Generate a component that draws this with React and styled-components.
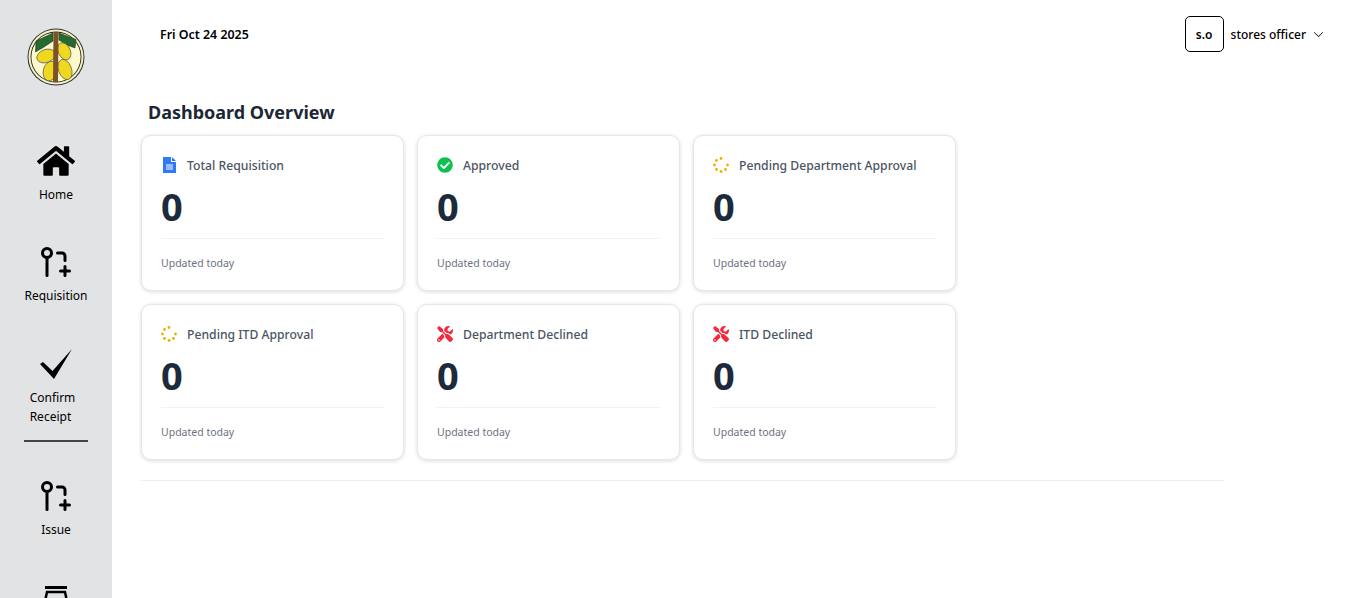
import React from 'react'
import styled, { createGlobalStyle } from 'styled-components'
import { FaHome, FaCheckCircle, FaTools } from 'react-icons/fa'
import { BsChevronDown } from 'react-icons/bs'
import { LuGitPullRequestCreate } from 'react-icons/lu'

const GlobalStyle = createGlobalStyle`
  html, body { margin: 0; padding: 0; height: 100%; overflow: hidden; background: #fff; }
  body { font-family: "Noto Sans", "Open Sans", sans-serif; color: #1f2937; }
`

const Layout = styled.div`
  display: flex;
  height: 598px;
  overflow: hidden;
`

const Sidebar = styled.aside`
  width: 112px;
  flex: none;
  height: 598px;
  overflow: hidden;
  background: #e2e3e5;
  display: flex;
  flex-direction: column;
  align-items: center;
  padding-top: 28px;
  box-sizing: border-box;
`

const LogoWrap = styled.div`
  width: 58px;
  height: 58px;
  margin-bottom: 56px;
  flex: none;
`

const NavItem = styled.a`
  width: 100%;
  display: flex;
  flex-direction: column;
  align-items: center;
  color: #000;
  font-size: 12px;
  line-height: 19px;
  margin-bottom: ${p => p.$gap || 0}px;
  flex: none;
`

const NavIcon = styled.span`
  height: 38px;
  display: flex;
  align-items: center;
  justify-content: center;
  margin-bottom: 5px;
  font-size: ${p => p.$size || 36}px;
`

const NavLabel = styled.span`
  text-align: ${p => p.$left ? 'left' : 'center'};
  margin-right: ${p => p.$left ? 7 : 0}px;
`

const NavRule = styled.div`
  width: 64px;
  height: 2px;
  background: #444;
  margin: 14px 0 35px;
  flex: none;
`

const Main = styled.main`
  flex: 1;
  min-width: 0;
  padding: 0 41px 0 29px;
`

const TopBar = styled.header`
  height: 68px;
  display: flex;
  align-items: center;
  justify-content: space-between;
  padding-left: 19px;
`

const DateText = styled.span`
  font-size: 12.4px;
  font-weight: 600;
  color: #000;
`

const UserMenu = styled.div`
  display: flex;
  align-items: center;
  gap: 7px;
  font-size: 12px;
  font-weight: 500;
  color: #000;
`

const Avatar = styled.div`
  width: 37px;
  height: 34px;
  border: 1px solid #000;
  border-radius: 5px;
  display: flex;
  align-items: center;
  justify-content: center;
  font-weight: 600;
  font-size: 12px;
`

const PageTitle = styled.h1`
  margin: 0 0 10px 7px;
  padding-top: 32px;
  font-size: 18px;
  line-height: 25px;
  font-weight: 700;
  color: #1c2735;
`

const CardGrid = styled.section`
  display: grid;
  grid-template-columns: repeat(3, 263px);
  gap: 13px;
  padding-bottom: 20px;
  border-bottom: 1px solid #eceef0;
  width: 1083px;
`

const Card = styled.article`
  height: 156px;
  box-sizing: border-box;
  background: #fff;
  border: 1px solid #e5e7eb;
  border-radius: 10px;
  box-shadow: 0 1px 4px rgba(0, 0, 0, 0.14);
  padding: 19px 19px 0;
`

const CardHead = styled.div`
  display: flex;
  align-items: center;
  gap: 10px;
  height: 20px;
  font-size: 12.2px;
  font-weight: 500;
  color: #4b5563;
`

const IconSlot = styled.span`
  width: 16px;
  height: 16px;
  flex: none;
  display: flex;
  align-items: center;
  justify-content: center;
  color: ${p => p.$color};
  font-size: 16px;
`

const CardValue = styled.div`
  font-size: 38px;
  line-height: 46px;
  font-weight: 700;
  color: #1c2a3c;
  margin-top: 8px;
  padding-bottom: 9px;
  border-bottom: 1px solid #f0f1f3;
`

const CardFoot = styled.div`
  font-size: 10.5px;
  line-height: 14px;
  color: #6b7280;
  margin-top: 17px;
`

const Logo = () => (
  <svg width="58" height="58" viewBox="0 0 58 58">
    <circle cx="29" cy="29" r="28.5" fill="#333" />
    <circle cx="29" cy="29" r="27.5" fill="#f4f1c8" />
    <circle cx="29" cy="29" r="25.5" fill="#25251d" />
    <circle cx="29" cy="29" r="24.6" fill="#fdf9cf" />
    <path d="M26 5 L9 13 L8.5 24 L17 19 L26 13Z" fill="#256b30" stroke="#14351a" strokeWidth=".6" />
    <path d="M32 5 L49 11.5 L48 20 L40 17 L32 12Z" fill="#256b30" stroke="#14351a" strokeWidth=".6" />
    <ellipse cx="19" cy="28" rx="9.5" ry="6.5" transform="rotate(-20 19 28)" fill="#f0d820" stroke="#555" strokeWidth=".7" />
    <ellipse cx="37.3" cy="23.3" rx="6" ry="9" transform="rotate(-25 37.3 23.3)" fill="#f0d820" stroke="#555" strokeWidth=".7" />
    <ellipse cx="23.3" cy="43" rx="7" ry="10" transform="rotate(15 23.3 43)" fill="#f0d820" stroke="#555" strokeWidth=".7" />
    <ellipse cx="38" cy="41.5" rx="6.5" ry="10.5" transform="rotate(-20 38 41.5)" fill="#f0d820" stroke="#555" strokeWidth=".7" />
    <path d="M26.5 4h5l-.5 50h-5z" fill="#7d5229" />
  </svg>
)

const CheckMark = () => (
  <svg width="34" height="34" viewBox="0 0 34 34">
    <path d="M1 17 L4 15 L13.5 24 L33 2 L15 32Z" fill="#000" />
  </svg>
)

const StoreIcon = () => (
  <svg width="36" height="36" viewBox="0 0 36 36" fill="none" stroke="#000">
    <path d="M7 2.5h22" strokeWidth="3" />
    <path d="M7.5 14 L9 7h18 l1.5 7" strokeWidth="2.5" />
    <path d="M9 14v18h18V14" strokeWidth="2.5" />
  </svg>
)

const DocIcon = () => (
  <svg width="13" height="16" viewBox="0 0 13 16">
    <path d="M0 0h8v5h5v11H0z" fill="#2f7bf6" />
    <path d="M9 0l4 4H9z" fill="#2f7bf6" />
    <path d="M3 8h7M3 10h7M3 12h7" stroke="#fff" strokeWidth="1" />
  </svg>
)

const DOTS = [[8, 1.5], [3.5, 3.5], [1.5, 8], [3.5, 12.5], [8, 14.5], [12.5, 12.5], [14.5, 8]]

const PendingIcon = () => (
  <svg width="16" height="16" viewBox="0 0 16 16">
    {DOTS.map(([cx, cy]) => (
      <circle key={cx + '-' + cy} cx={cx} cy={cy} r="1.4" fill="#f0b000" />
    ))}
  </svg>
)

const cards = [
  { title: 'Total Requisition', color: '#2f7bf6', icon: <DocIcon /> },
  { title: 'Approved', color: '#0bc24f', icon: <FaCheckCircle /> },
  { title: 'Pending Department Approval', color: '#f0b000', icon: <PendingIcon /> },
  { title: 'Pending ITD Approval', color: '#f0b000', icon: <PendingIcon /> },
  { title: 'Department Declined', color: '#f5293c', icon: <FaTools /> },
  { title: 'ITD Declined', color: '#f5293c', icon: <FaTools /> },
]

export default function App() {
  return (
    <Layout>
      <GlobalStyle />
      <Sidebar>
        <LogoWrap><Logo /></LogoWrap>
        <NavItem $gap={39}>
          <NavIcon $size={38}><FaHome /></NavIcon>
          <NavLabel>Home</NavLabel>
        </NavItem>
        <NavItem $gap={40}>
          <NavIcon><LuGitPullRequestCreate /></NavIcon>
          <NavLabel>Requisition</NavLabel>
        </NavItem>
        <NavItem>
          <NavIcon><CheckMark /></NavIcon>
          <NavLabel $left>Confirm<br />Receipt</NavLabel>
        </NavItem>
        <NavRule />
        <NavItem $gap={45}>
          <NavIcon><LuGitPullRequestCreate /></NavIcon>
          <NavLabel>Issue</NavLabel>
        </NavItem>
        <NavItem>
          <NavIcon><StoreIcon /></NavIcon>
        </NavItem>
      </Sidebar>
      <Main>
        <TopBar>
          <DateText>Fri Oct 24 2025</DateText>
          <UserMenu>
            <Avatar>s.o</Avatar>
            <span>stores officer</span>
            <BsChevronDown size={11} />
          </UserMenu>
        </TopBar>
        <PageTitle>Dashboard Overview</PageTitle>
        <CardGrid>
          {cards.map(card => (
            <Card key={card.title}>
              <CardHead>
                <IconSlot $color={card.color}>{card.icon}</IconSlot>
                {card.title}
              </CardHead>
              <CardValue>0</CardValue>
              <CardFoot>Updated today</CardFoot>
            </Card>
          ))}
        </CardGrid>
      </Main>
    </Layout>
  )
}
